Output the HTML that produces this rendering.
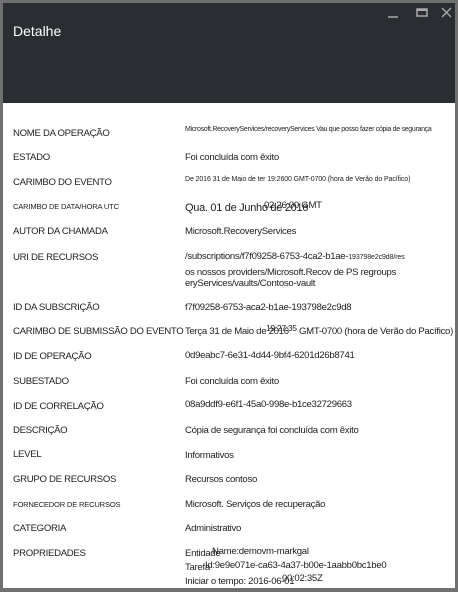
<!DOCTYPE html>
<html><head><meta charset="utf-8"><style>
*{margin:0;padding:0;box-sizing:border-box}
body{width:458px;height:592px;background:#707070;position:relative;overflow:hidden;font-family:"Liberation Sans",Arial,sans-serif;color:#222}
#hdr{position:absolute;left:3px;top:3px;width:452px;height:100px;background:#2a2d31}
#hdr .t{position:absolute;left:10px;top:20px;color:#fff;font-size:14px}
#main{position:absolute;left:3px;top:103px;width:452px;height:485px;background:#fff}
.l,.v{position:absolute;font-size:9.6px;white-space:nowrap;color:#222;letter-spacing:-0.3px}
.l{left:13px}
.v{left:185px}
.s{font-size:7px;letter-spacing:-0.1px}
.sl{font-size:7.6px;letter-spacing:-0.2px}
</style></head><body>
<div id="hdr"><div class="t">Detalhe</div>
<svg style="position:absolute;left:385px;top:4px" width="65" height="12">
<line x1="0" y1="10" x2="10" y2="10" stroke="#aaa" stroke-width="1.5"/>
<rect x="29" y="2" width="10" height="7" fill="none" stroke="#aaa" stroke-width="1.5"/>
<rect x="29" y="2" width="10" height="2" fill="#aaa"/>
<path d="M54 1L63 10M63 1L54 10" stroke="#aaa" stroke-width="1.3"/>
</svg></div>
<div id="main"></div>
<div class="l" style="top:128px">NOME DA OPERAÇÃO</div><div class="v s" style="top:126px;letter-spacing:-0.3px">Microsoft.RecoveryServices/recoveryServices Vau que posso fazer cópia de segurança</div>
<div class="l" style="top:152px">ESTADO</div><div class="v" style="top:152px">Foi concluída com êxito</div>
<div class="l" style="top:177px">CARIMBO DO EVENTO</div><div class="v s" style="top:176px">De 2016 31 de Maio de ter 19:2600 GMT-0700 (hora de Verão do Pacífico)</div>
<div class="l sl" style="top:202px">CARIMBO DE DATA/HORA UTC</div><div class="v" style="top:202px;font-size:11px">Qua. 01 de Junho de 2016</div><div class="v" style="left:264px;top:200px">02:26:00 GMT</div>
<div class="l" style="top:226px">AUTOR DA CHAMADA</div><div class="v" style="top:226px">Microsoft.RecoveryServices</div>
<div class="l" style="top:252px">URI DE RECURSOS</div><div class="v" style="top:251px">/subscriptions/f7f09258-6753-4ca2-b1ae-<span class="s">193798e2c9d8/res</span></div>
<div class="v" style="top:267px">os nossos providers/Microsoft.Recov de PS regroups</div>
<div class="v" style="top:278px">eryServices/vaults/Contoso-vault</div>
<div class="l" style="top:302px">ID DA SUBSCRIÇÃO</div><div class="v" style="top:302px">f7f09258-6753-aca2-b1ae-193798e2c9d8</div>
<div class="l" style="top:326px">CARIMBO DE SUBMISSÃO DO EVENTO</div><div class="v" style="top:326px">Terça 31 de Maio de 2016</div><div class="v" style="left:266px;top:323px;font-size:8.5px">19:27:35</div><div class="v" style="left:299px;top:326px">GMT-0700 (hora de Verão do Pacífico)</div>
<div class="l" style="top:351px">ID DE OPERAÇÃO</div><div class="v" style="top:350px">0d9eabc7-6e31-4d44-9bf4-6201d26b8741</div>
<div class="l" style="top:376px">SUBESTADO</div><div class="v" style="top:376px">Foi concluída com êxito</div>
<div class="l" style="top:401px">ID DE CORRELAÇÃO</div><div class="v" style="top:399px">08a9ddf9-e6f1-45a0-998e-b1ce32729663</div>
<div class="l" style="top:425px">DESCRIÇÃO</div><div class="v" style="top:425px">Cópia de segurança foi concluída com êxito</div>
<div class="l" style="top:449px">LEVEL</div><div class="v" style="top:450px">Informativos</div>
<div class="l" style="top:474px">GRUPO DE RECURSOS</div><div class="v" style="top:474px">Recursos contoso</div>
<div class="l sl" style="top:500px">FORNECEDOR DE RECURSOS</div><div class="v" style="top:499px">Microsoft. Serviços de recuperação</div>
<div class="l" style="top:523px">CATEGORIA</div><div class="v" style="top:523px">Administrativo</div>
<div class="l" style="top:548px">PROPRIEDADES</div><div class="v" style="top:548px">Entidade</div><div class="v" style="left:212px;top:546px">Name:demovm-markgal</div>
<div class="v" style="top:562px">Tarefa</div><div class="v" style="left:205px;top:560px">Id:9e9e071e-ca63-4a37-b00e-1aabb0bc1be0</div>
<div class="v" style="top:576px">Iniciar o tempo: 2016-06-01</div><div class="v" style="left:282px;top:573px">00:02:35Z</div>
</body></html>
